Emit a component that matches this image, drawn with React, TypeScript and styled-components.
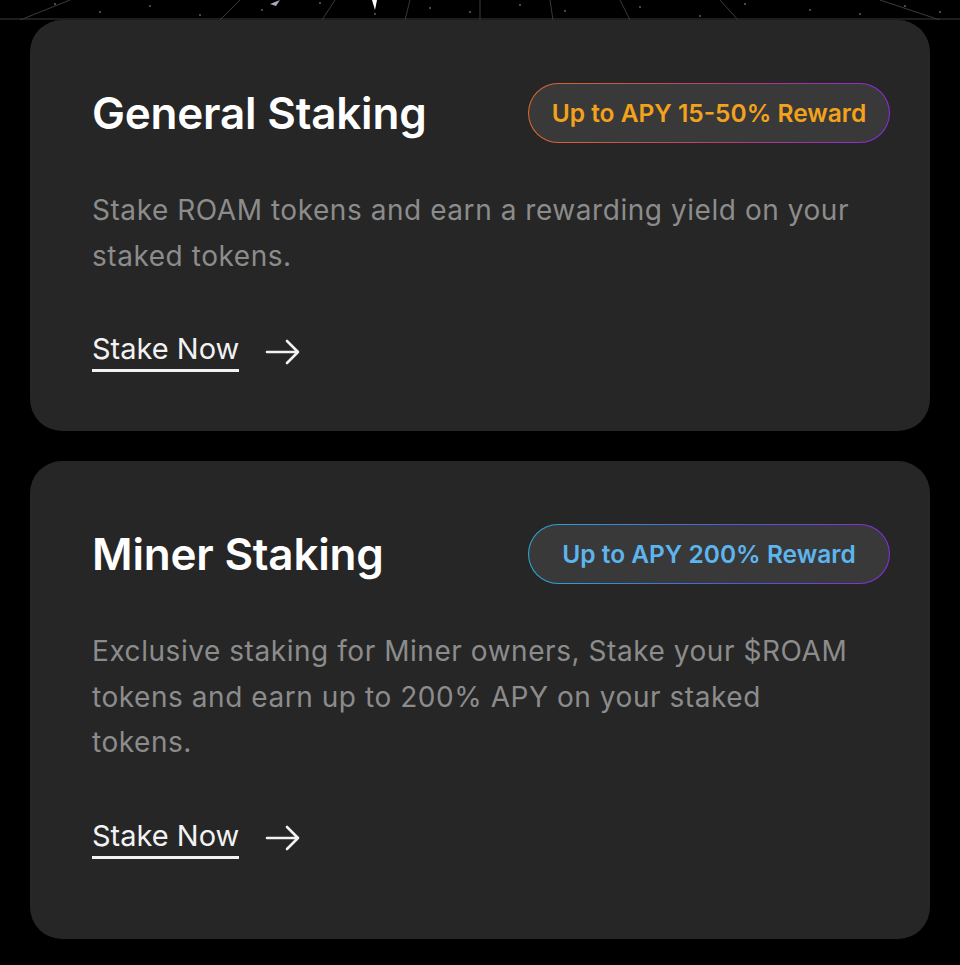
import styled, { createGlobalStyle } from "styled-components";

const Global = createGlobalStyle`
  html, body {
    margin: 0;
    padding: 0;
    background: #000;
    font-family: Inter, "Noto Sans", sans-serif;
  }
`;

const cards = [
  {
    title: "General Staking",
    badge: "Up to APY 15-50% Reward",
    tone: "orange" as const,
    text: "Stake ROAM tokens and earn a rewarding yield on your staked tokens.",
    bottom: 59,
  },
  {
    title: "Miner Staking",
    badge: "Up to APY 200% Reward",
    tone: "blue" as const,
    text: "Exclusive staking for Miner owners, Stake your $ROAM tokens and earn up to 200% APY on your staked tokens.",
    bottom: 80,
  },
];

function Stars() {
  const dots = [
    [55, 4], [100, 12], [150, 6], [200, 15], [262, 10], [320, 3], [375, 14], [430, 8],
    [470, 12], [520, 5], [565, 11], [640, 7], [700, 16], [745, 4], [810, 10],
    [860, 14], [905, 6], [940, 12],
  ];
  return (
    <svg width="960" height="20" viewBox="0 0 960 20">
      <g stroke="#3a3a3a" strokeWidth="1">
        <line x1="0" y1="19" x2="960" y2="19" />
        <line x1="70" y1="0" x2="20" y2="20" />
        <line x1="240" y1="0" x2="220" y2="20" />
        <line x1="335" y1="0" x2="322" y2="20" />
        <line x1="410" y1="0" x2="405" y2="20" />
        <line x1="480" y1="0" x2="480" y2="20" />
        <line x1="550" y1="0" x2="553" y2="20" />
        <line x1="620" y1="0" x2="630" y2="20" />
        <line x1="720" y1="0" x2="738" y2="20" />
        <line x1="880" y1="0" x2="940" y2="20" />
      </g>
      <path d="M270 4 L280 0 L276 6 Z" fill="#a9a9c9" />
      <path d="M372 0 L375 10 L377 0 Z" fill="#ffffff" />
      {dots.map(([x, y], i) => (
        <circle key={i} cx={x} cy={y} r="0.9" fill="#6a6a6a" />
      ))}
    </svg>
  );
}

function Arrow() {
  return (
    <svg width="36" height="28" viewBox="0 0 36 28" fill="none">
      <path
        d="M2 14 H33 M22 3 L33 14 L22 25"
        stroke="#f2f2f2"
        strokeWidth="2.6"
        strokeLinecap="round"
        strokeLinejoin="round"
      />
    </svg>
  );
}

export default function App() {
  return (
    <>
      <Global />
      <Backdrop>
        <Stars />
      </Backdrop>
      <List>
        {cards.map((c) => (
          <Card key={c.title} $bottom={c.bottom}>
            <Head>
              <Title>{c.title}</Title>
              <Badge $tone={c.tone}>{c.badge}</Badge>
            </Head>
            <Text>{c.text}</Text>
            <Action href="#">
              <span>Stake Now</span>
              <Arrow />
            </Action>
          </Card>
        ))}
      </List>
    </>
  );
}

const Backdrop = styled.div`
  height: 20px;
  overflow: hidden;
  svg {
    display: block;
  }
`;

const List = styled.div`
  display: flex;
  flex-direction: column;
  gap: 30px;
  padding: 0 30px 28px;
`;

const Card = styled.div<{ $bottom: number }>`
  background: #262626;
  border-radius: 32px;
  padding: 62px 40px ${(p) => p.$bottom}px 62px;
  display: flex;
  flex-direction: column;
`;

const Head = styled.div`
  display: flex;
  justify-content: space-between;
  align-items: center;
  height: 62px;
`;

const Title = styled.h2`
  margin: 0;
  color: #fff;
  font-size: 44px;
  font-weight: 600;
  letter-spacing: -0.2px;
`;

const Badge = styled.div<{ $tone: "orange" | "blue" }>`
  width: 362px;
  height: 60px;
  box-sizing: border-box;
  display: flex;
  align-items: center;
  justify-content: center;
  border-radius: 999px;
  border: 1.5px solid transparent;
  font-size: 24.5px;
  font-weight: 600;
  color: ${(p) => (p.$tone === "orange" ? "#f3a21c" : "#5db5ee")};
  background:
    linear-gradient(#393939, #393939) padding-box,
    ${(p) =>
        p.$tone === "orange"
          ? "linear-gradient(90deg, #d96a2c, #b23a7a 60%, #8a2be2)"
          : "linear-gradient(90deg, #29a9d6, #5058d8 60%, #8a2be2)"}
      border-box;
`;

const Text = styled.p`
  margin: 44px 0 0;
  color: #8c8c8c;
  font-size: 28px;
  letter-spacing: 0.55px;
  line-height: 45.5px;
  max-width: 765px;
`;

const Action = styled.a`
  margin-top: 52px;
  display: flex;
  align-items: center;
  gap: 26px;
  text-decoration: none;
  color: #f2f2f2;
  font-size: 29px;

  span {
    border-bottom: 3px solid #f2f2f2;
    padding-bottom: 2px;
    line-height: 36px;
  }
`;
